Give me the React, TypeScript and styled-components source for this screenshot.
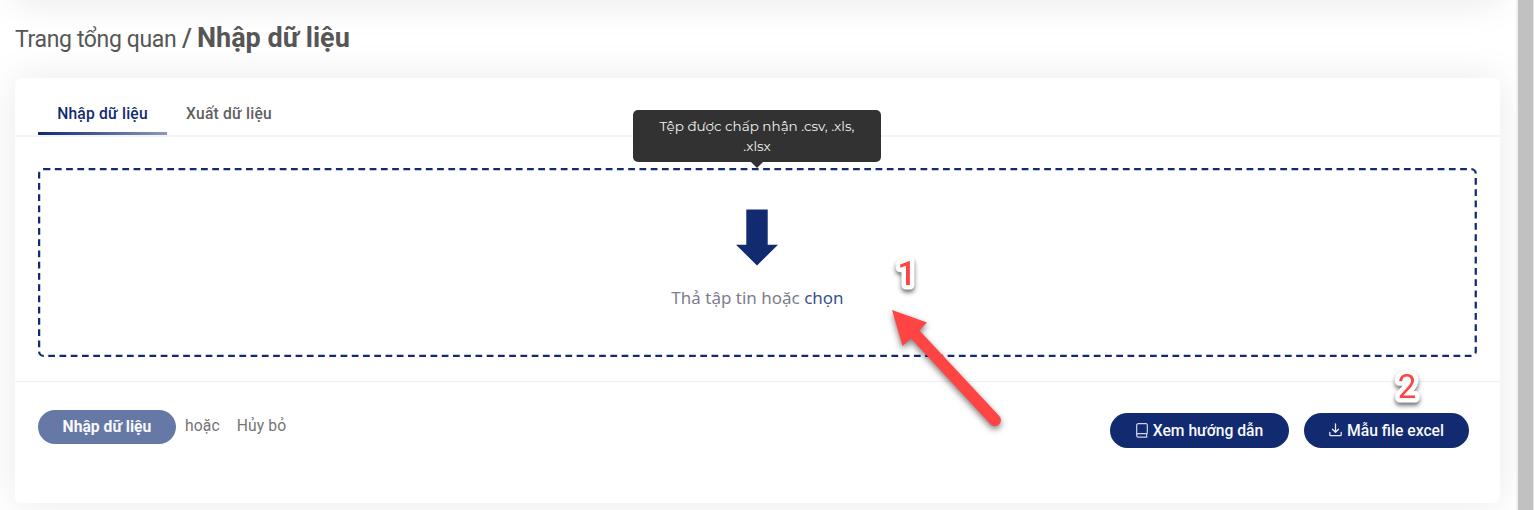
import React from "react";
import styled, { createGlobalStyle, css } from "styled-components";

const navy = "#112a70";

const GlobalStyle = createGlobalStyle`
  *, *::before, *::after { box-sizing: border-box; }
  body {
    margin: 0;
    background: #fff;
    color: #565656;
    font-family: Roboto, "Liberation Sans", sans-serif;
    overflow: hidden;
  }
`;

const Screen = styled.div`
  position: relative;
  display: flex;
  width: 1534px;
  height: 510px;
  overflow: hidden;
`;

const Page = styled.main`
  flex: 1;
  display: flex;
  flex-direction: column;
  padding: 0 16px 0 15px;
  overflow: hidden;
`;

const TopShade = styled.div`
  flex: none;
  height: 60px;
  margin-top: -60px;
  box-shadow: 0 0 40px rgba(0, 0, 0, 0.1);
`;

const Breadcrumb = styled.h1`
  display: flex;
  align-items: baseline;
  height: 78px;
  margin: 0;
  padding-top: 21px;
  line-height: 34px;
  font-size: 23px;
  font-weight: 400;
  white-space: pre;
`;

const Crumb = styled.span`
  width: 167px;
  letter-spacing: -0.36px;
`;

const Current = styled.span`
  font-weight: 700;
  font-size: 27px;
`;

const Slash = styled.span`
  width: 15px;
  font-size: 25.5px;
  font-weight: 500;
`;

const Card = styled.section`
  flex: none;
  height: 425px;
  background: #fff;
  border-radius: 6px;
  box-shadow: 0 0 40px rgba(0, 0, 0, 0.085);
`;

const Tabs = styled.nav`
  display: flex;
  height: 59px;
  padding-left: 23px;
  border-bottom: 2px solid #f3f3f9;
`;

const Tab = styled.div<{ $active?: boolean; $width: number }>`
  height: 57px;
  width: ${(p) => p.$width}px;
  padding-top: 25px;
  text-align: center;
  font-size: 15.6px;
  letter-spacing: 0.23px;
  line-height: 22px;
  font-weight: 500;
  white-space: nowrap;
  color: ${(p) => (p.$active ? navy : "#606060")};
  ${(p) =>
    p.$active &&
    css`
      background: linear-gradient(90deg, #112a70, #8d98bb) bottom / 100% 3px no-repeat;
    `}
`;

const Body = styled.div`
  height: 245px;
  padding: 31px 23px 24px;
  border-bottom: 1.5px solid #efeff5;
`;

const DropZone = styled.div`
  position: relative;
  display: flex;
  flex-direction: column;
  align-items: center;
  height: 189px;
  padding-top: 41px;

  &::before {
    content: "";
    position: absolute;
    top: 0;
    left: 0;
    width: calc(100% / 1.125);
    height: calc(100% / 1.125);
    border: 2px dashed ${navy};
    border-radius: 5px;
    transform: scale(1.125);
    transform-origin: 0 0;
  }
`;

const DropArrow = styled.svg`
  margin-right: 2px;
`;

const DropText = styled.p`
  margin: 19px 0 0;
  font-family: "Noto Sans", sans-serif;
  font-size: 17px;
  line-height: 26px;
  color: #7d7d8c;
`;

const Choose = styled.span`
  color: #3a5092;
`;

const Tooltip = styled.div`
  position: absolute;
  z-index: 2;
  left: 595px;
  top: -58px;
  width: 248px;
  height: 52px;
  padding-top: 6px;
  border-radius: 5px;
  background: #323232;
  color: #f1f1f1;
  text-align: center;
  font-family: Montserrat, Inter, sans-serif;
  font-size: 13.5px;
  line-height: 20px;

  &::after {
    content: "";
    position: absolute;
    top: 100%;
    left: 118px;
    border: 6px solid transparent;
    border-top-color: #323232;
    border-bottom: 0;
  }
`;

const Footer = styled.footer`
  display: flex;
  align-items: flex-start;
  padding: 28px 31px 0 23px;
`;

const Pill = styled.button<{ $width: number; $muted?: boolean }>`
  display: flex;
  align-items: center;
  justify-content: center;
  gap: 5px;
  width: ${(p) => p.$width}px;
  height: ${(p) => (p.$muted ? 34 : 35)}px;
  margin: 0;
  padding: 0 0 ${(p) => (p.$muted ? 2 : 1)}px;
  border: 0;
  border-radius: 18px;
  background: ${(p) => (p.$muted ? "#6678a5" : navy)};
  color: #f8f9fc;
  font-family: inherit;
  font-size: 15.7px;
  font-weight: ${(p) => (p.$muted ? 700 : 500)};
  white-space: nowrap;

  svg { flex: none; }
`;

const Plain = styled.span<{ $gap: number }>`
  margin: 5px 0 0 ${(p) => p.$gap}px;
  font-size: 15.7px;
  letter-spacing: 0.1px;
  line-height: 22px;
  color: #747474;
`;

const Actions = styled.div`
  display: flex;
  gap: 15px;
  margin: 3px 0 0 auto;
`;

const Scrollbar = styled.div`
  flex: none;
  width: 18px;
  background: #c1c1c1;
  border-left: 2px solid #f0f0f0;
  border-right: 1px solid #e6e6e6;
`;

const Annotations = styled.svg`
  position: absolute;
  inset: 0;
  z-index: 3;
  pointer-events: none;
`;

const ArrowShape = styled.path`
  fill: #ff4444;
  filter: drop-shadow(0 3px 3px rgba(0, 0, 0, 0.5));
`;

const Mark = styled.text<{ $weight: number }>`
  font-family: Roboto, "Liberation Sans", sans-serif;
  font-size: 33px;
  font-weight: ${(p) => p.$weight};
  fill: #ff4444;
  stroke: #fff;
  stroke-width: 9px;
  stroke-linejoin: round;
  paint-order: stroke;
  filter: drop-shadow(0 3px 2px rgba(0, 0, 0, 0.55));
`;

const BookIcon = () => (
  <svg width="12" height="15" viewBox="0 0 12 15" fill="none" stroke="#cfd6e8" strokeWidth="1.2">
    <path d="M11.3 10.6V2.1C11.3 1.2 10.8.7 10 .7H2.3C1.3.7.7 1.3.7 2.3v10.1c0 1 .6 1.7 1.6 1.7h9M11.3 10.6h-9c-1 0-1.6.8-1.6 1.8M11 10.6c-.7 1.1-.7 2.4 0 3.5" />
  </svg>
);

const DownloadIcon = () => (
  <svg width="13" height="14" viewBox="0 0 13 14" fill="none" stroke="#e8ebf5" strokeWidth="1.3" strokeLinejoin="round" strokeLinecap="round">
    <path d="M6.5 1v8M3.5 6.3l3 3 3-3M.8 9.5v2.2c0 .6.4 1 1 1h9.4c.6 0 1-.4 1-1V9.5" />
  </svg>
);

export default function App() {
  return (
    <Screen>
      <GlobalStyle />
      <Page>
        <TopShade />
        <Breadcrumb>
          <Crumb>Trang tổng quan</Crumb>
          <Slash>/</Slash>
          <Current>Nhập dữ liệu</Current>
        </Breadcrumb>
        <Card>
          <Tabs>
            <Tab $active $width={129}>Nhập dữ liệu</Tab>
            <Tab $width={124}>Xuất dữ liệu</Tab>
          </Tabs>
          <Body>
            <DropZone>
              <Tooltip>
                Tệp được chấp nhận .csv, .xls,
                <br />
                .xlsx
              </Tooltip>
              <DropArrow width="42" height="57" viewBox="0 0 42 57">
                <path d="M10.3.5h21.4v35.2H42L21 56.5 0 35.7h10.3z" fill={navy} />
              </DropArrow>
              <DropText>
                Thả tập tin hoặc <Choose>chọn</Choose>
              </DropText>
            </DropZone>
          </Body>
          <Footer>
            <Pill $width={138} $muted>Nhập dữ liệu</Pill>
            <Plain $gap={9}>hoặc</Plain>
            <Plain $gap={17}>Hủy bỏ</Plain>
            <Actions>
              <Pill $width={179}>
                <BookIcon />
                Xem hướng dẫn
              </Pill>
              <Pill $width={165}>
                <DownloadIcon />
                Mẫu file excel
              </Pill>
            </Actions>
          </Footer>
        </Card>
      </Page>
      <Scrollbar />
      <Annotations width="1534" height="510" viewBox="0 0 1534 510">
        <ArrowShape d="M892 310 927 322.5 919.5 330.5 999.3 416A6 6 0 0 1 990.5 424.3L911 338.5 902.5 346z" />
        <Mark $weight={500} x="897.5" y="285">1</Mark>
        <Mark $weight={400} x="1397.8" y="397.5">2</Mark>
      </Annotations>
    </Screen>
  );
}
